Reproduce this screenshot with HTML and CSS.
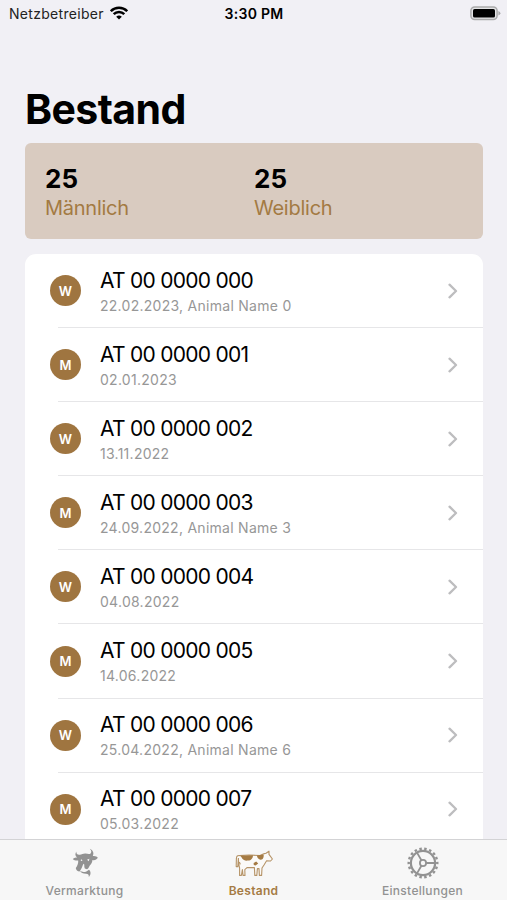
FILE: index.html
```html
<!DOCTYPE html>
<html lang="de">
  <head>
    <meta charset="UTF-8" />
    <meta name="viewport" content="width=device-width, initial-scale=1.0" />
    <title>Bestand</title>
    <link rel="stylesheet" href="styles.css">
  </head>
  <body>
    <svg width="0" height="0" class="symbols">
      <symbol id="chevron" viewBox="0 0 10 16">
        <path d="M1.5 1.7 L8 8 L1.5 14.3" fill="none" stroke="#bdbdbf" stroke-width="2.3" stroke-linecap="round" stroke-linejoin="round" />
      </symbol>
    </svg>

    <div class="screen">
      <!-- Status Bar -->
      <header class="status-bar">
        <div class="carrier">
          <span class="carrier-name">Netzbetreiber</span>
          <svg class="wifi" width="18" height="14" viewBox="0 0 18 14" fill="none" stroke="#000" stroke-width="2.5">
            <path d="M0.8 5.2 A11.6 11.6 0 0 1 17.2 5.2" />
            <path d="M3.7 8.2 A7.5 7.5 0 0 1 14.3 8.2" />
            <path d="M9 13.6 L6.2 10.8 A4 4 0 0 1 11.8 10.8 Z" fill="#000" stroke="none" />
          </svg>
        </div>
        <span class="time">3:30 PM</span>
        <svg class="battery" width="31" height="15" viewBox="0 0 31 15">
          <rect x="0.9" y="0.9" width="26.2" height="12.6" rx="3.8" fill="#e4e4e6" stroke="#aaaaab" stroke-width="1.5" />
          <rect x="3" y="2.9" width="22" height="8.6" rx="1.6" fill="#000" />
          <path d="M28.4 4.9 Q30.4 5.6 30.4 7.2 Q30.4 8.8 28.4 9.5 Z" fill="#aaaaab" />
        </svg>
      </header>

      <main class="content">
        <h1>Bestand</h1>

        <!-- Summary -->
        <section class="summary">
          <div class="stat">
            <span class="stat-value">25</span>
            <span class="stat-label">Männlich</span>
          </div>
          <div class="stat">
            <span class="stat-value">25</span>
            <span class="stat-label">Weiblich</span>
          </div>
        </section>

        <!-- Animal List -->
        <ul class="animals">
          <li class="animal">
            <span class="badge">W</span>
            <div class="info">
              <span class="tag">AT 00 0000 000</span>
              <span class="detail">22.02.2023, Animal Name 0</span>
            </div>
            <svg class="chevron"><use href="#chevron" /></svg>
          </li>
          <li class="animal">
            <span class="badge">M</span>
            <div class="info">
              <span class="tag">AT 00 0000 001</span>
              <span class="detail">02.01.2023</span>
            </div>
            <svg class="chevron"><use href="#chevron" /></svg>
          </li>
          <li class="animal">
            <span class="badge">W</span>
            <div class="info">
              <span class="tag">AT 00 0000 002</span>
              <span class="detail">13.11.2022</span>
            </div>
            <svg class="chevron"><use href="#chevron" /></svg>
          </li>
          <li class="animal">
            <span class="badge">M</span>
            <div class="info">
              <span class="tag">AT 00 0000 003</span>
              <span class="detail">24.09.2022, Animal Name 3</span>
            </div>
            <svg class="chevron"><use href="#chevron" /></svg>
          </li>
          <li class="animal">
            <span class="badge">W</span>
            <div class="info">
              <span class="tag">AT 00 0000 004</span>
              <span class="detail">04.08.2022</span>
            </div>
            <svg class="chevron"><use href="#chevron" /></svg>
          </li>
          <li class="animal">
            <span class="badge">M</span>
            <div class="info">
              <span class="tag">AT 00 0000 005</span>
              <span class="detail">14.06.2022</span>
            </div>
            <svg class="chevron"><use href="#chevron" /></svg>
          </li>
          <li class="animal">
            <span class="badge">W</span>
            <div class="info">
              <span class="tag">AT 00 0000 006</span>
              <span class="detail">25.04.2022, Animal Name 6</span>
            </div>
            <svg class="chevron"><use href="#chevron" /></svg>
          </li>
          <li class="animal">
            <span class="badge">M</span>
            <div class="info">
              <span class="tag">AT 00 0000 007</span>
              <span class="detail">05.03.2022</span>
            </div>
            <svg class="chevron"><use href="#chevron" /></svg>
          </li>
        </ul>
      </main>

      <!-- Tab Bar -->
      <nav class="tab-bar">
        <a class="tab">
          <svg width="30" height="31" viewBox="0 0 30 31" fill="currentColor">
            <path d="M6.6 4.6 C5.8 6.6 7.2 8 9.6 7.8 C12 7.4 13.4 6.4 15.6 6.6 C17.6 6.8 19.4 7.4 20.6 6.4 C21.8 5.2 21.4 3.4 19.8 1.8 C22.8 3 24.4 6 22.8 9 C25 8.6 27 9.4 27.8 10.8 C26.6 12.8 24.6 13.6 22.4 13 C22.4 15.4 21 17.2 19.8 18.6 C19 20 18.8 21.6 17 22.2 L14.8 21.6 C13.8 19.6 14.8 17.6 13.8 16.8 C12.6 17.4 12.6 20 11 22.2 L9.6 24.4 C7.6 24.4 5.8 23 5.8 21 C7.6 18.4 8.4 16 8.2 13.4 C6.2 13.6 4 13.4 2.8 12 C4.2 10.8 5.8 10.6 7.2 10.6 C5 9.2 4.8 6.4 6.6 4.6 Z" />
            <path d="M9.6 23.6 C12 25.4 14.4 25.2 16.4 24.4 L19 22.8 C21.4 25 20.8 28 18.8 30 C19 27.8 18.2 26.8 16 26.8 C13 26.8 11 26 9.6 23.6 Z" />
            <path d="M17 12.8 L19.4 11.8 L18.8 14.2 Z M11 12 L12.6 13.8 L10.8 14 Z" fill="#f7f7f7" />
          </svg>
          <span>Vermarktung</span>
        </a>
        <a class="tab active">
          <svg width="38" height="31" viewBox="0 0 38 31">
            <path d="M5 8.6 C2.6 8 1.4 9.4 1.4 11.4 L1.2 19.6 L2.8 19.6 L3.4 11 M5 8.6 L14 8 L25 8.6 L29.4 6.6 L31 6.2 L34 4.2 L34 7.4 L37.4 12 L35.6 14 L31.6 13.8 L29 18 L27 21 L26.6 28.4 L24.4 28.4 L24 21.6 L22.4 21.6 L21.8 28.4 L19.8 28.4 L19.4 20.6 L12 20.6 L9.8 22.6 L10 28.4 L8 28.4 L7.4 22.6 L6.4 28.4 L4.6 28.4 L4.6 21 L3.6 17 L3.4 11" fill="#fbfaf8" stroke="currentColor" stroke-width="1.1" stroke-opacity="0.8" stroke-linejoin="round" />
            <path d="M5.4 8.8 L18 8.2 C18 11.4 15.8 13.8 12.8 13.6 C10 14 7.6 12.8 6.8 10.8 Z" fill="currentColor" />
            <path d="M22 8.6 L28.6 7.6 C29 10.4 28 13 25.6 12.8 C23.6 12.4 21.8 10.8 22 8.6 Z" fill="currentColor" />
            <path d="M18.6 16 L21.2 14.6 L23.2 16.6 L20.6 18.6 L18.8 18 Z M3.8 14.6 L5.6 16 L5 18.4 Z" fill="currentColor" />
          </svg>
          <span>Bestand</span>
        </a>
        <a class="tab">
          <svg width="32" height="32" viewBox="0 0 32 32" fill="none" stroke="currentColor">
            <!-- 18 teeth: circumference split evenly by pathLength -->
            <circle cx="16" cy="16" r="14.3" stroke-width="2.4" pathLength="36" stroke-dasharray="1 1" stroke-dashoffset="0.5" />
            <circle cx="16" cy="16" r="12.1" stroke-width="2.2" />
            <circle cx="16" cy="16" r="3.1" stroke-width="1.8" />
            <path d="M19 16 H28 M14.4 13.3 L10 5.6 M14.4 18.7 L10 26.4" stroke-width="1.8" />
          </svg>
          <span>Einstellungen</span>
        </a>
      </nav>
    </div>
  </body>
</html>
```

FILE: styles.css
```css
body {
  margin: 0;
  font-family: "Inter", "Liberation Sans", sans-serif;
  background: #f1f0f5;
  color: #000;
}

.symbols {
  display: block;
}

.screen {
  display: flex;
  flex-direction: column;
  height: 100vh;
  overflow: hidden;
}

/* Status bar */
.status-bar {
  display: grid;
  grid-template-columns: 1fr auto 1fr;
  align-items: center;
  flex: none;
  height: 27px;
  padding: 0 6px 0 9px;
  font-size: 14px;
}

.carrier {
  display: flex;
  align-items: center;
  gap: 6px;
}

.carrier-name {
  letter-spacing: 0.3px;
  color: #222;
}

.wifi {
  margin-top: -2px;
}

.time {
  margin-right: 2px;
  font-weight: 600;
  letter-spacing: 0.3px;
}

.battery {
  justify-self: end;
}

/* Content */
.content {
  flex: 1;
  min-height: 0;
  overflow: hidden;
  padding: 57px 24px 0 25px;
}

h1 {
  margin: 0;
  font-size: 41px;
  font-weight: 700;
  line-height: 50px;
  letter-spacing: -0.6px;
}

.summary {
  display: grid;
  grid-template-columns: 1fr 1fr;
  box-sizing: border-box;
  height: 96px;
  margin-top: 9px;
  padding: 22px 20px 0;
  border-radius: 6px;
  background: #d9cbc0;
}

.stat {
  display: flex;
  flex-direction: column;
}

.stat-value {
  font-size: 26px;
  font-weight: 700;
  line-height: 28px;
}

.stat-label {
  font-size: 20px;
  line-height: 30px;
  letter-spacing: -0.25px;
  color: #a37a43;
}

.animals {
  list-style: none;
  margin: 15px 0 0;
  padding: 0;
  border-radius: 11px 11px 0 0;
  background: #fff;
}

.animal {
  display: flex;
  align-items: center;
  box-sizing: border-box;
  height: 74.1px;
  padding: 0 25px 1px;
  background: linear-gradient(#e6e6e8, #e6e6e8) 33px 100% / 100% 1px no-repeat;
}

.badge {
  display: flex;
  align-items: center;
  justify-content: center;
  width: 31px;
  height: 31px;
  margin-right: 19px;
  border-radius: 50%;
  background: #9f7540;
  color: #fff;
  font-size: 13px;
  font-weight: 600;
}

.info {
  display: flex;
  flex: 1;
  flex-direction: column;
  padding-top: 2px;
}

.tag {
  font-size: 21px;
  line-height: 28px;
  letter-spacing: -0.72px;
}

.detail {
  font-size: 14px;
  line-height: 22px;
  letter-spacing: 0.27px;
  color: #979797;
}

.chevron {
  width: 10px;
  height: 16px;
}

/* Tab bar */
.tab-bar {
  display: grid;
  grid-template-columns: repeat(3, 1fr);
  flex: none;
  box-sizing: border-box;
  height: 61px;
  border-top: 1px solid #d3d3d5;
  background: #f7f7f7;
}

.tab {
  display: flex;
  flex-direction: column;
  align-items: center;
  justify-content: space-between;
  padding: 7px 0 2px;
  font-size: 12px;
  font-weight: 500;
  line-height: 15px;
  letter-spacing: 0.3px;
  color: #929292;
}

.tab.active {
  color: #a57b44;
  font-weight: 600;
}
```
